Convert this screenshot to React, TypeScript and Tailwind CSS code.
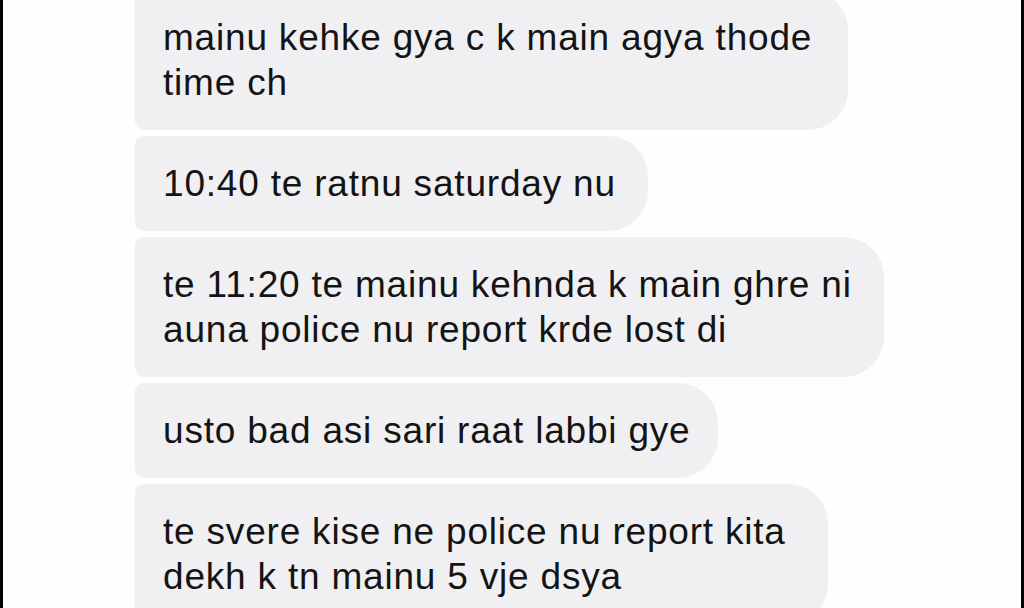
type Message = { lines: string[]; pr: string };

const messages: Message[] = [
  { lines: ['mainu kehke gya c k main agya thode', 'time ch'], pr: 'pr-[36px]' },
  { lines: ['10:40 te ratnu saturday nu'], pr: 'pr-[32px]' },
  { lines: ['te 11:20 te mainu kehnda k main ghre ni', 'auna police nu report krde lost di'], pr: 'pr-[32px]' },
  { lines: ['usto bad asi sari raat labbi gye'], pr: 'pr-[28px]' },
  { lines: ['te svere kise ne police nu report kita', 'dekh k tn mainu 5 vje dsya'], pr: 'pr-[42px]' },
];

function Bubble({ lines, pr }: Message) {
  return (
    <div className={`w-fit bg-[#f0f0f3] text-[#141414] rounded-l-[9px] rounded-r-[40px] pl-[28px] py-[25px] ${pr}`}>
      {lines.map((line, i) => (
        <div key={i} className="text-[37px] leading-[45px] tracking-[0.8px] whitespace-nowrap">
          {line}
        </div>
      ))}
    </div>
  );
}

export default function App() {
  return (
    <div
      className="w-[1024px] h-[608px] overflow-hidden bg-[#fefefe] border-l-[3px] border-r-[3px] border-black"
      style={{ fontFamily: '"Liberation Sans", Arial, sans-serif' }}
    >
      <div className="flex flex-col items-start gap-[6px] pl-[132px] -mt-[10px]">
        {messages.map((m, i) => (
          <Bubble key={i} lines={m.lines} pr={m.pr} />
        ))}
      </div>
    </div>
  );
}
